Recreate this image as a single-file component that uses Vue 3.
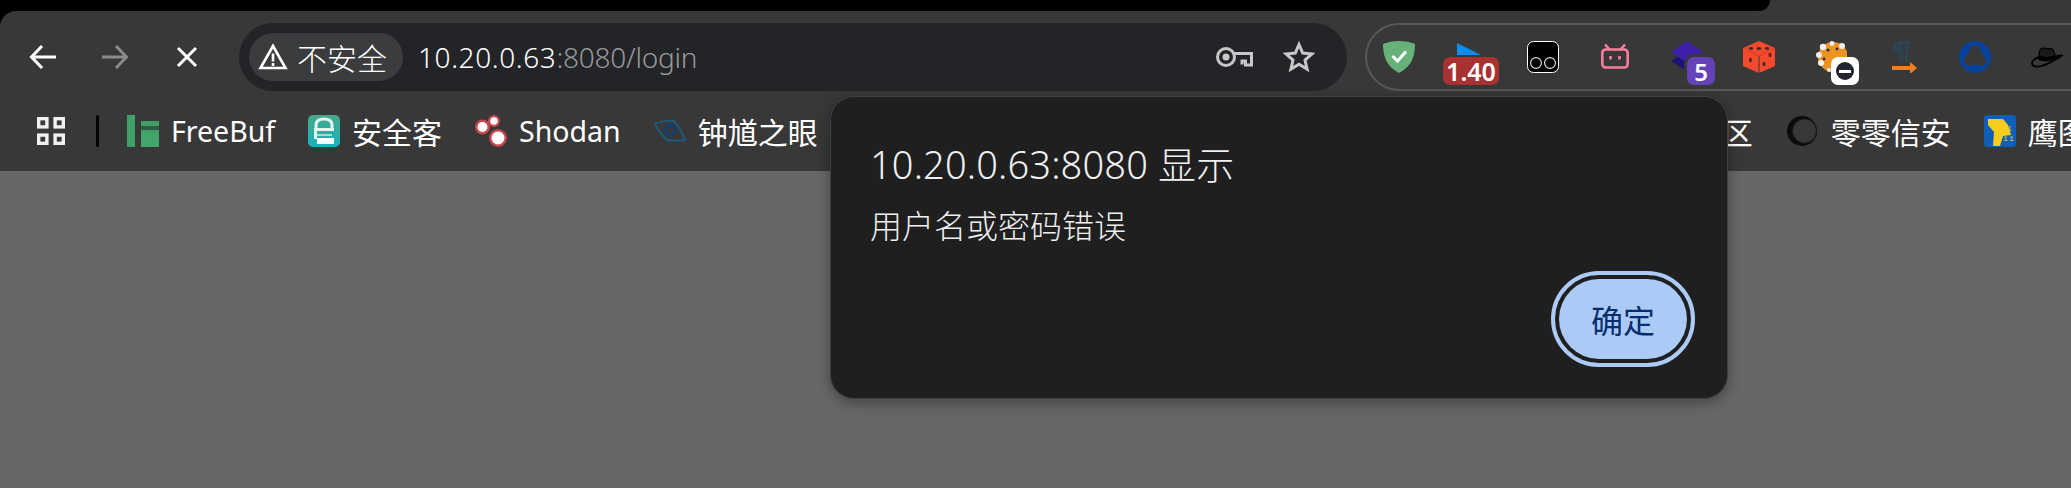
<template>
  <div class="browser">
    <!-- 顶部标签栏残留 -->
    <div class="top-strip"><div class="tab-black"></div></div>

    <!-- 工具栏 -->
    <div class="toolbar">
      <div class="nav-cell">
        <svg width="32" height="32" viewBox="0 0 32 32" fill="none" stroke="#fff" stroke-width="3"><path d="M29 16H5M15 5 4.500 16 15 27" /></svg>
      </div>
      <div class="nav-cell">
        <svg width="32" height="32" viewBox="0 0 32 32" fill="none" stroke="#8b8b8b" stroke-width="3"><path d="M3 16h24M17 5l10.500 11L17 27" /></svg>
      </div>
      <div class="nav-cell">
        <svg width="32" height="32" viewBox="0 0 32 32" fill="none" stroke="#fff" stroke-width="3"><path d="M7 7l18 18M25 7 7 25" /></svg>
      </div>

      <div class="omnibox">
        <div class="chip">
          <svg width="30" height="28" viewBox="0 0 30 28" fill="none" stroke="#fff" stroke-width="2.600"><path d="M15 3 2.500 25h25z" stroke-linejoin="miter" /><path d="M15 10.500v8M15 20v3" /></svg>
          <span>不安全</span>
        </div>
        <div class="url"><span class="url-host">10.20.0.63</span><span class="url-dim">:8080/login</span></div>
        <svg class="key" width="38" height="22" viewBox="0 0 38 22" fill="none" stroke="#c7c7c7" stroke-width="3"><circle cx="11" cy="11" r="8.500" /><circle cx="11" cy="11" r="3.500" fill="#c7c7c7" stroke="none" /><path d="M19 7.500H36.500V19H30.500v-4H27v3.500" /></svg>
        <svg class="star" width="32" height="32" viewBox="0 0 32 32" fill="none" stroke="#c7c7c7" stroke-width="3"><path d="M16 3.500l3.700 8.600 9.300.8-7 6.100 2.100 9.100L16 23.300l-8.100 4.800L10 19 3 12.900l9.300-.8z" /></svg>
      </div>

      <!-- 扩展图标 -->
      <div class="extensions">
        <div class="ext">
          <svg width="32" height="32" viewBox="0 0 32 32"><path d="M16 0C10 0 5 1 0 3c0 12 3 22 16 29C29 25 32 15 32 3 27 1 22 0 16 0z" fill="#67b279" /><path d="M9.500 15l5 5L23 10.500" fill="none" stroke="#fff" stroke-width="3" /></svg>
        </div>
        <div class="ext">
          <svg width="32" height="32" viewBox="0 0 32 32"><path d="M2 2l24 12H2z" fill="#0a8cf0" /></svg>
          <span class="badge badge-wide">1.40</span>
        </div>
        <div class="ext">
          <svg width="32" height="32" viewBox="0 0 32 32"><rect x=".5" y=".5" width="31" height="31" rx="6" fill="#000" stroke="#fff" /><circle cx="9" cy="22" r="5.400" fill="none" stroke="#ddd" stroke-width="1.200" /><circle cx="23" cy="22" r="5.400" fill="none" stroke="#ddd" stroke-width="1.200" /></svg>
        </div>
        <div class="ext">
          <svg width="32" height="32" viewBox="0 0 32 32" fill="none" stroke="#fb7c9f" stroke-width="2.600"><rect x="3.300" y="8.500" width="25.400" height="18" rx="3.500" /><path d="M10.500 8.500 6 3.500M21.500 8.500l4.500-5" /><path d="M11.500 15v3.500M20.500 15v3.500" /></svg>
        </div>
        <div class="ext">
          <svg width="32" height="32" viewBox="0 0 32 32"><path d="M0 20 16 10l16 10-16 10z" fill="#1c1379" /><path d="M0 11 16 0l16 11-16 11z" fill="#3d1fa8" /></svg>
          <span class="badge badge-square badge-purple">5</span>
        </div>
        <div class="ext">
          <svg width="32" height="32" viewBox="0 0 32 32"><path d="M16 0 32 7v18l-16 7-16-7V7z" fill="#f34a2d" /><path d="M16 15v17" stroke="#3a3a3a" stroke-width="1" /><path d="M0 7l16 8 16-8" fill="none" stroke="#d63b22" stroke-width="1" /><g fill="#4a2a24"><ellipse cx="16" cy="7.500" rx="2.500" ry="1.500" /><ellipse cx="8" cy="7.500" rx="2.200" ry="1.400" /><ellipse cx="24" cy="7.500" rx="2.200" ry="1.400" /><ellipse cx="7.500" cy="19" rx="1.500" ry="2.300" /><ellipse cx="21" cy="23" rx="1.500" ry="2.300" /><ellipse cx="27" cy="14" rx="1.500" ry="2.300" /></g></svg>
        </div>
        <div class="ext">
          <svg width="32" height="32" viewBox="0 0 32 32"><circle cx="18" cy="16" r="15" fill="#ee9321" /><g fill="#2a2f3a"><circle cx="13" cy="9" r="1.600" /><circle cx="22" cy="8" r="1.400" /><circle cx="9" cy="18" r="1.400" /></g><g fill="#eef1f3"><circle cx="27" cy="5" r="3" /><circle cx="8" cy="6" r="3.200" /><circle cx="17" cy="2.500" r="2.400" /><circle cx="4" cy="14" r="3" /><circle cx="6" cy="22" r="3" /><circle cx="14" cy="29" r="2" /></g></svg>
          <span class="badge badge-square badge-white"><i></i></span>
        </div>
        <div class="ext">
          <svg width="32" height="32" viewBox="0 0 32 32"><path d="M12 0h12v3h-2.500v18H18V3h-2.500v18H12v-9C8 12 6 9.500 6 6s2.500-6 6-6z" fill="#2d4350" /><path d="M5 27h20" stroke="#f57c1f" stroke-width="4" /><path d="M23 21l7 6-7 6z" fill="#f57c1f" /></svg>
        </div>
        <div class="ext">
          <svg width="32" height="32" viewBox="0 0 32 32"><circle cx="16" cy="16" r="16" fill="#07439c" /><path d="M16 4c3 0 4.500 3 6 6.500 1.500 3.500 5 6 5 9.500 0 3.500-3 4.500-5.500 4.500S19 23.500 16 23.500s-3 1-5.500 1S5 23.500 5 20c0-3.500 3.500-6 5-9.500S13 4 16 4z" fill="#383838" /></svg>
        </div>
        <div class="ext">
          <svg width="32" height="32" viewBox="0 0 32 32"><path d="M8.500 16C4 17 1 20 1 22.500c0 3 5 4 9.500 2.500 7-2 14-6.500 20.500-10.500-2.500-.500-4.500.500-7 1.500" fill="none" stroke="#000" stroke-width="1.800" /><path d="M8 18.500C7.500 11 9 7 11.500 7c3 0 4.500 1 7 .500 3.500-.500 5 2.500 6 9-5 3.500-12 4-16.500 2z" fill="#1a1a1a" stroke="#000" stroke-width="1.200" /><path d="M8.500 14c4.500 2.500 10.500 2.500 15.500 0l.700 3c-5 3-12 3.500-16.500 1.500z" fill="#000" /></svg>
        </div>
      </div>
    </div>

    <!-- 书签栏 -->
    <div class="bookmarks">
      <svg class="apps" width="28" height="28" viewBox="0 0 28 28" fill="none" stroke="#f1f1f1" stroke-width="3.400"><rect x="1.700" y="1.700" width="8.200" height="8.200" /><rect x="18.100" y="1.700" width="8.200" height="8.200" /><rect x="1.700" y="18.100" width="8.200" height="8.200" /><rect x="18.100" y="18.100" width="8.200" height="8.200" /></svg>
      <div class="bm-sep"></div>
      <div class="bm">
        <svg width="32" height="32" viewBox="0 0 32 32"><rect width="8" height="32" fill="#3f9f67" /><rect x="14" y="6" width="18" height="5" fill="#3f9f67" /><rect x="14" y="11" width="18" height="4" fill="#2f5c45" /><rect x="14" y="15" width="18" height="3" fill="#3f9f67" /><rect x="14" y="18" width="18" height="14" fill="#42a56c" /></svg>
        <span class="latin">FreeBuf</span>
      </div>
      <div class="bm">
        <svg width="32" height="32" viewBox="0 0 32 32"><defs><linearGradient id="aqk" x1="0" y1="0" x2="0" y2="1"><stop offset="0" stop-color="#45a888" /><stop offset="1" stop-color="#17b3bc" /></linearGradient></defs><rect width="32" height="32" rx="5" fill="url(#aqk)" /><path d="M8 13V10c0-4 3-6 8-6s8 2 8 6v3" fill="none" stroke="#e4f6f0" stroke-width="3" /><rect x="6" y="13" width="20" height="3" fill="#e4f6f0" /><rect x="6" y="16" width="3" height="8" fill="#e4f6f0" /><rect x="9" y="19" width="15" height="2" fill="#9fdccf" /><rect x="9" y="23" width="17" height="6" fill="#fff" /></svg>
        <span>安全客</span>
      </div>
      <div class="bm">
        <svg width="32" height="32" viewBox="0 0 32 32"><circle cx="7.500" cy="12" r="7.500" fill="#c8464d" /><circle cx="7.500" cy="12" r="5" fill="#fff" /><circle cx="19" cy="6" r="6" fill="#c8464d" /><circle cx="19" cy="6" r="3.800" fill="#fff" /><circle cx="23" cy="23" r="9" fill="#c8464d" /><circle cx="23" cy="23" r="6.500" fill="#fff" /></svg>
        <span class="latin">Shodan</span>
      </div>
      <div class="bm">
        <svg width="32" height="32" viewBox="0 0 32 32" fill="none" stroke="#1d5a80" stroke-width="1.800"><path d="M1 9c6-3 13-4 19-3 4 4 8 11 11 19-6 1-12 1-18 0C8 21 4 15 1 9z" /><circle cx="16" cy="15" r="5" stroke="#123f72" stroke-width="3" /></svg>
        <span>钟馗之眼</span>
      </div>
      <!-- 这一段被弹窗挡住 -->
      <div class="bm bm-covered"><span>社区</span></div>
      <div class="bm">
        <svg width="32" height="32" viewBox="0 0 32 32"><circle cx="15" cy="16" r="15" fill="#0b0b0b" /><circle cx="17.500" cy="16" r="12" fill="#383838" stroke="#1c1c1c" stroke-width="1.200" /></svg>
        <span>零零信安</span>
      </div>
      <div class="bm">
        <svg width="32" height="32" viewBox="0 0 32 32"><rect width="32" height="32" rx="3" fill="#0f5fb8" /><path d="M4 4h15l5 6 3 10-8 1-3 10H9l1-14-6-7z" fill="#f6cc1d" /><g fill="#f6cc1d" font-size="8" font-family="Liberation Mono, monospace"><text x="17" y="16">1</text><text x="23" y="16">1</text><text x="19" y="26">1</text><text x="25" y="26">1</text></g></svg>
        <span>鹰图</span>
      </div>
    </div>

    <main class="content"></main>

    <!-- alert 弹窗 -->
    <div class="dialog">
      <div class="dlg-title">10.20.0.63:8080 显示</div>
      <div class="dlg-msg">用户名或密码错误</div>
      <div class="dlg-actions">
        <button class="dlg-btn">确定</button>
      </div>
    </div>
  </div>
</template>

<script setup>
</script>

<style>
html, body {
  margin: 0;
  background: #000;
}
</style>

<style scoped>
.browser {
  position: relative;
  width: 2071px;
  height: 488px;
  overflow: hidden;
  display: flex;
  flex-direction: column;
  background: #000;
  font-family: "Noto Sans", "Noto Sans CJK SC", sans-serif;
  color: #fff;
}

.top-strip {
  height: 11px;
  background: linear-gradient(90deg, #000 50%, #383838 50%);
}

.tab-black {
  width: 1770px;
  height: 11px;
  background: #000;
  border-bottom-right-radius: 14px;
}

.toolbar {
  display: flex;
  align-items: flex-start;
  height: 85px;
  padding: 12px 0 0 7px;
  box-sizing: border-box;
  background: #383838;
  border-top-left-radius: 16px;
}

.nav-cell {
  width: 72px;
  height: 68px;
  display: flex;
  align-items: center;
  justify-content: center;
  flex: none;
}

.omnibox {
  display: flex;
  align-items: center;
  flex: none;
  width: 1108px;
  height: 68px;
  margin-left: 16px;
  padding-left: 10px;
  box-sizing: border-box;
  background: #232428;
  border-radius: 34px;
}

.chip {
  display: flex;
  align-items: center;
  gap: 9px;
  width: 154px;
  height: 48px;
  padding-left: 9px;
  box-sizing: border-box;
  background: #3b3c3e;
  border-radius: 24px;
  font-size: 30px;
  font-weight: 300;
  flex: none;
}

.url {
  margin-left: 15px;
  font-size: 28px;
  font-weight: 300;
  white-space: nowrap;
}

.url-host {
  letter-spacing: 0.6px;
}

.url-dim {
  color: #999;
  letter-spacing: -0.25px;
}

.key {
  margin-left: auto;
}

.star {
  margin-left: 30px;
  margin-right: 32px;
}

.extensions {
  display: flex;
  align-items: center;
  gap: 40px;
  flex: 1;
  height: 68px;
  margin-left: 18px;
  padding-left: 16px;
  box-sizing: border-box;
  border: 2px solid #585858;
  border-right: none;
  border-radius: 34px 0 0 34px;
  overflow: hidden;
}

.ext {
  position: relative;
  width: 32px;
  height: 32px;
  flex: none;
}

.ext svg {
  display: block;
}

.badge {
  position: absolute;
  top: 16px;
  height: 28px;
  display: flex;
  align-items: center;
  justify-content: center;
  box-sizing: border-box;
  border-radius: 7px;
  font-size: 24px;
  font-weight: 600;
  color: #fff;
}

.badge-wide {
  left: -12px;
  width: 56px;
  background: #a83232;
  font-size: 25px;
}

.badge-square {
  left: 16px;
  width: 28px;
}

.badge-purple {
  background: #6542b8;
  box-shadow: 0 0 0 3px #383838;
}

.badge-white {
  background: #fff;
}

.badge-white i {
  display: flex;
  width: 18px;
  height: 18px;
  border-radius: 50%;
  background: #22252d;
  align-items: center;
  justify-content: center;
}

.badge-white i::after {
  content: "";
  width: 12px;
  height: 3px;
  background: #fff;
}

.bookmarks {
  display: flex;
  align-items: center;
  flex: none;
  height: 75px;
  padding: 0 0 5px 37px;
  box-sizing: border-box;
  background: #383838;
  overflow: hidden;
  white-space: nowrap;
}

.apps {
  flex: none;
}

.bm-sep {
  flex: none;
  width: 3px;
  height: 32px;
  margin: 0 28px 0 31px;
  background: #000;
  border-radius: 2px;
}

.bm {
  display: flex;
  align-items: center;
  flex: none;
  gap: 12px;
  margin-right: 33px;
  font-size: 30px;
}

.bm .latin {
  font-size: 28.5px;
}

.bm svg {
  flex: none;
}

.bm-covered {
  margin-left: 842px;
  margin-right: 34px;
}

.content {
  flex: 1;
  background: #676767;
}

.dialog {
  position: absolute;
  left: 830px;
  top: 96px;
  width: 898px;
  height: 303px;
  padding: 43px 40px 0 39px;
  box-sizing: border-box;
  background: #1f1f1f;
  border: 1px solid #414141;
  border-radius: 24px;
  box-shadow: 0 4px 14px rgba(0, 0, 0, 0.35);
  color: #f0f0f0;
}

.dlg-title {
  font-size: 38px;
  font-weight: 300;
  line-height: 48px;
  letter-spacing: 0.15px;
}

.dlg-msg {
  margin-top: 16px;
  font-size: 32px;
  font-weight: 300;
  line-height: 44px;
}

.dlg-actions {
  display: flex;
  justify-content: flex-end;
  margin-top: 31px;
}

.dlg-btn {
  width: 128px;
  height: 80px;
  border: none;
  border-radius: 40px;
  background: #abcbf6;
  color: #062e6f;
  font-family: inherit;
  font-size: 32px;
  outline: 4px solid #abcbf6;
  outline-offset: 4px;
}
</style>
